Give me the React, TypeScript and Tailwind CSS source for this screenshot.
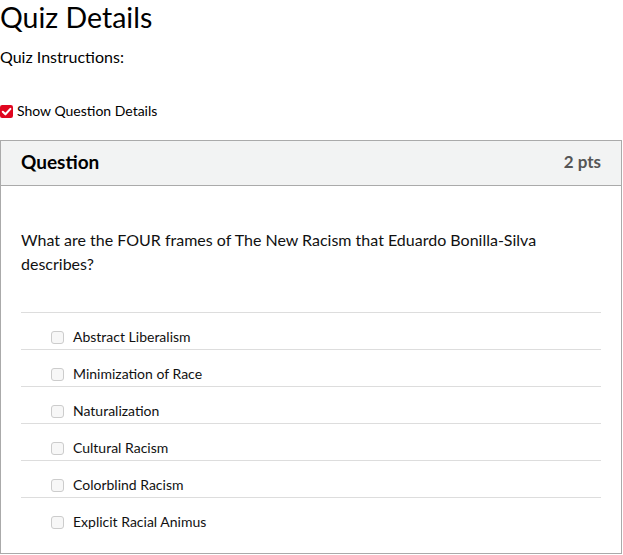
import React from 'react';

const answers = [
  'Abstract Liberalism',
  'Minimization of Race',
  'Naturalization',
  'Cultural Racism',
  'Colorblind Racism',
  'Explicit Racial Animus',
];

const CheckIcon: React.FC = () => (
  <svg viewBox="0 0 12 12" className="h-[13px] w-[13px]">
    <rect x="0" y="0" width="12" height="12" rx="2" fill="#e0061f" />
    <path d="M2.6 6.2 L5 8.6 L9.6 3.6" stroke="#fff" strokeWidth="1.9" fill="none" strokeLinecap="round" strokeLinejoin="round" />
  </svg>
);

const App: React.FC = () => {
  return (
    <div className="w-[623px] h-[555px] overflow-hidden bg-white text-[#000] font-['Lato',sans-serif]">
      <h1 className="text-[28.5px] leading-[34px] font-normal">Quiz Details</h1>
      <p className="mt-[11px] text-[16px] leading-[24px]">Quiz Instructions:</p>

      <label className="mt-[32px] flex items-center gap-[4px] text-[14px] leading-[20px]">
        <CheckIcon />
        <span>Show Question Details</span>
      </label>

      <div className="mt-[19px] w-[622px] h-[414px] border border-[#aaaaaa]">
        <div className="flex items-center justify-between h-[45px] px-[20px] pb-[2px] bg-[#f2f3f3] border-b border-[#aaaaaa]">
          <span className="text-[19px] font-bold">Question</span>
          <span className="text-[17px] font-bold text-[#555]">2 pts</span>
        </div>

        <div className="px-[20px] pt-[42px]">
          <p className="text-[16px] leading-[24px] text-[#111]">
            What are the FOUR frames of The New Racism that Eduardo Bonilla-Silva describes?
          </p>

          <div className="mt-[36px]">
            {answers.map((a) => (
              <div
                key={a}
                className="flex items-center h-[37px] pt-[12px] pl-[30px] border-t border-[#dddddd]"
              >
                <span className="h-[13px] w-[13px] rounded-[3px] border border-[#cccccc] bg-[#f7f7f7]" />
                <span className="ml-[9px] text-[14px] leading-[20px] text-[#111]">{a}</span>
              </div>
            ))}
          </div>
        </div>
      </div>
    </div>
  );
};

export default App;
